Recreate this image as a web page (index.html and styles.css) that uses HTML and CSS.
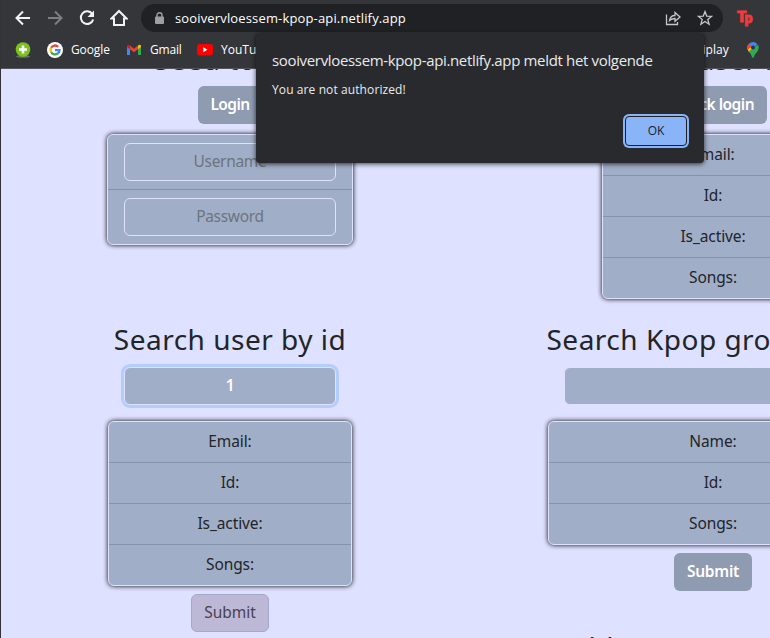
FILE: index.html
```
<!DOCTYPE html>
<html lang="nl">
<head>
<meta charset="utf-8">
<title>Kpop API</title>
<link rel="stylesheet" href="styles.css">
</head>
<body>
<div class="window">
  <header class="chrome">
    <div class="toolbar">
      <svg class="nav" viewBox="0 0 18 18"><path d="M16 9H3M9 2.5L2.5 9L9 15.5"/></svg>
      <svg class="nav nav-off" viewBox="0 0 18 18"><path d="M2 9h13M9 2.500L15.500 9L9 15.500"/></svg>
      <svg class="nav" viewBox="0 0 18 18"><path d="M14.300 5A6.300 6.300 0 1 0 15.200 10.500"/><path class="solid" d="M16 1.500V8H9.500z"/></svg>
      <svg class="nav" viewBox="0 0 18 18"><path d="M1.500 9.500L9 2l7.500 7.500H14V16H4V9.500z"/></svg>
      <div class="omnibox">
        <svg class="lock" viewBox="0 0 10 13"><rect y="4.500" width="9" height="7.500" rx="1"/><path d="M2 5V3.200a2.500 2.500 0 0 1 5 0V5"/></svg>
        <span class="url">sooivervloessem-kpop-api.netlify.app</span>
        <svg class="action share" viewBox="0 0 16 16"><path d="M1.500 4.500V14.500H12.500V12"/><path d="M4.500 10.500C5 7 7 5.500 10 5.500V2.500L15 7L10 11.300V8.500C7.500 8.500 6 9 4.500 10.500z"/></svg>
        <svg class="action" viewBox="0 0 16 16"><path d="M8 1.600L9.700 6.100L14.600 6.400L10.800 9.500L12.100 14.200L8 11.500L3.900 14.200L5.200 9.500L1.400 6.400L6.300 6.100z"/></svg>
      </div>
      <span class="ext"><b class="ext-t">T</b><b class="ext-p">p</b></span>
    </div>
    <div class="bookmarks">
      <svg class="ico plus" viewBox="0 0 16 16"><ellipse cx="8" cy="14.500" rx="7" ry="1.300" fill="#6b6e70"/><circle cx="8" cy="7.500" r="7.300" fill="#79c41c"/><path d="M8 3.500v8M4 7.500h8" stroke="#fff" stroke-width="2.600"/></svg>
      <svg class="ico google" viewBox="0 0 16 16"><circle cx="8" cy="8" r="8" fill="#fff"/><g fill="none" stroke-width="2.300"><path d="M4.100 5.800A4.500 4.500 0 0 1 11.200 4.800" stroke="#ea4335"/><path d="M4.100 10.200A4.500 4.500 0 0 1 4.100 5.800" stroke="#fbbc05"/><path d="M4.100 10.200A4.500 4.500 0 0 0 10.900 11.400" stroke="#34a853"/><path d="M8 8.100h4.500A4.500 4.500 0 0 1 10.900 11.400" stroke="#4285f4"/></g></svg>
      <span class="mark m-google">Google</span>
      <svg class="ico gmail" viewBox="0 0 14 12"><path d="M0 2v9h3V5z" fill="#4285f4"/><path d="M14 2v9h-3V5z" fill="#34a853"/><path d="M3 1.500L7 4.700L11 1.500V5.200L7 8.300L3 5.200z" fill="#ea4335"/><path d="M0 2Q.5 0 3 1.500V5.200L0 3z" fill="#c5221f"/><path d="M14 2Q13.500 0 11 1.500V5.200L14 3z" fill="#fbbc04"/></svg>
      <span class="mark m-gmail">Gmail</span>
      <svg class="ico yt" viewBox="0 0 16 12"><rect width="16" height="11.500" rx="3" fill="#f00"/><path d="M6.300 3.300v5L10.500 5.800z" fill="#fff"/></svg>
      <span class="mark m-yt">YouTube</span>
      <span class="mark m-play">Multiplay</span>
      <svg class="ico maps" viewBox="0 0 12 16"><path d="M1.200 9Q4.500 12 5.100 15.200Q6 16.500 6.800 15.200Q7.500 12.500 10 10Q13 6 11 2.800L3 8z" fill="#34a853"/><path d="M.3 5Q0 7.500 1.700 9.700L6 6L2 2Q.5 3.500.3 5z" fill="#fbbc04"/><path d="M1.600 2L4.500 5L.5 7.500Q-.5 4 1.600 2z" fill="#ea4335"/><path d="M1.600 2Q6-2 10.500 2L6 7L4 4z" fill="#4285f4"/><circle cx="6" cy="5.500" r="2" fill="#243454"/></svg>
    </div>
  </header>
  <main class="page">
    <section class="cell top">
      <h2>Seed token</h2>
      <button class="btn login">Login</button>
      <ul class="list form-list">
        <li><input class="field" placeholder="Username"></li>
        <li><input class="field" placeholder="Password"></li>
      </ul>
    </section>
    <section class="cell top">
      <h2>Check user info</h2>
      <button class="btn check">Check login</button>
      <ul class="list check-list"><li>Email:</li><li>Id:</li><li>Is_active:</li><li>Songs:</li></ul>
    </section>
    <section class="cell">
      <h2>Search user by id</h2>
      <input class="field search focused" value="1">
      <ul class="list user-list"><li>Email:</li><li>Id:</li><li>Is_active:</li><li>Songs:</li></ul>
      <button class="btn submit pending">Submit</button>
    </section>
    <section class="cell">
      <h2>Search Kpop group by id</h2>
      <input class="field search wide">
      <ul class="list group-list"><li>Name:</li><li>Id:</li><li>Songs:</li></ul>
      <button class="btn submit">Submit</button>
      <h2 class="h-next">Add Kpop group to list</h2>
    </section>
  </main>
  <div class="dialog" role="alertdialog">
    <div class="d-title"><span>sooivervloessem-kpop-api.netlify.app meldt het volgende</span></div>
    <div class="d-text">You are not authorized!</div>
    <button class="ok">OK</button>
  </div>
</div>
</body>
</html>
```
FILE: styles.css
```
* { box-sizing: border-box; }
body { margin: 0; background: #dee1ff; }
.window {
  position: relative;
  width: 770px;
  height: 638px;
  overflow: hidden;
  font-family: "Noto Sans", sans-serif;
  color: #212529;
  background: #dee1ff;
  border-left: 1px solid #343438;
}
.chrome {
  position: relative;
  height: 69px;
  background: #35363a;
  border-bottom: 1px solid #55565b;
  color: #fff;
  font-family: "Open Sans", sans-serif;
}
.toolbar { display: flex; align-items: center; height: 36px; padding-left: 13px; }
.nav { width: 18px; height: 18px; margin-right: 14px; fill: none; stroke: #f1f3f4; stroke-width: 2; flex: none; }
.nav .solid { fill: #f1f3f4; stroke: none; }
.nav-off { stroke: #7d7e82; }
.omnibox { display: flex; align-items: center; width: 582px; height: 28px; border-radius: 14px; background: #202124; flex: none; margin-left: -1px; padding: 0 10px 0 14px; }
.lock { width: 10px; height: 13px; fill: #9aa0a6; flex: none; }
.lock path { fill: none; stroke: #9aa0a6; stroke-width: 1.4; }
.url { font-size: 13px; letter-spacing: .15px; margin-left: 10px; white-space: nowrap; flex: 1; }
.action { width: 16px; height: 16px; fill: none; stroke: #c4c7ca; stroke-width: 1.3; flex: none; }
.share { margin-right: 16px; }
.ext { display: flex; margin-left: 14px; color: #f33a3a; font: 900 16px/18px Roboto, sans-serif; -webkit-text-stroke: .8px #f33a3a; }
.ext-t { font-size: 15px; margin-top: -1px; }
.ext-p { font-size: 14px; margin-left: -2px; }
.bookmarks { display: flex; align-items: center; height: 28px; padding-left: 14px; font-size: 12px; white-space: nowrap; }
.ico { flex: none; }
.plus { width: 16px; height: 16px; margin-right: 16px; }
.google { width: 16px; height: 16px; margin-right: 8px; }
.gmail { width: 14px; height: 12px; margin-right: 9px; }
.yt { width: 16px; height: 12px; margin-right: 8px; }
.maps { width: 12px; height: 16px; }
.mark { flex: none; line-height: 16px; padding-bottom: 1px; }
.m-google { width: 56px; letter-spacing: -.1px; }
.m-gmail { width: 47px; letter-spacing: -.2px; }
.m-yt { width: 430px; }
.m-play { width: 80px; margin-right: 18px; text-align: right; margin-left: -2px; letter-spacing: .1px; }
.page { display: grid; grid-template-columns: 458px 508px; grid-template-rows: 252px 317px; }
.cell { display: flex; flex-direction: column; align-items: center; }
.top { margin-top: -29px; }
h2 { margin: -1px 0 9px; height: 38px; font-size: 28px; line-height: 38px; letter-spacing: .5px; font-weight: 400; white-space: nowrap; flex: none; }
.top h2 { margin: 0 0 8px; }
.btn { width: 78px; height: 38px; padding: 0 0 2px; border: 0; border-radius: 6px; background: #8e9bb1; color: #fff; font: 600 15.5px "Noto Sans", sans-serif; letter-spacing: -.25px; flex: none; }
.login { width: 64px; letter-spacing: -.6px; }
.check { width: 108px; letter-spacing: -.5px; }
.pending { background: #bcb8d5; border: 1px solid #a1a9cc; color: #48434f; font-weight: 400; letter-spacing: 0; }
.list { list-style: none; margin: 0; padding: 0; border: 1px solid #dee1ff; border-radius: 6px; background: #a1aec8; box-shadow: 0 0 5px #000; flex: none; font-size: 15.5px; letter-spacing: -.1px; text-align: center; }
.list li { height: 41px; line-height: 38px; border-bottom: 1px solid #8492ac; }
.list li:last-child { height: 40px; border-bottom: 0; }
.top .list { margin-top: 10px; }
.form-list { width: 246px; }
.form-list li { height: 55px; padding: 8px 0; }
.form-list li:last-child { height: 54px; }
.check-list { width: 222px; }
.user-list { width: 244px; }
.group-list { width: 330px; }
.field { display: block; width: 212px; height: 38px; margin: 0 auto; padding: 0 0 2px; border: 1px solid #dee1ff; border-radius: 6px; background: #a1aec8; color: #fff; text-align: center; font: 15.5px "Noto Sans", sans-serif; letter-spacing: -.3px; outline: 0; flex: none; }
.field::placeholder { color: #6c757d; opacity: 1; }
.search { margin-bottom: 16px; font-weight: 600; }
.focused { box-shadow: 0 0 0 3px #b4cdff; }
.wide { width: 298px; }
.submit { margin-top: 8px; }
.h-next { margin-top: 37px; }
.dialog { position: absolute; left: 255px; top: 33px; width: 448px; height: 130px; padding: 16px; border-radius: 4px; background: #292a2d; color: #e8eaed; box-shadow: 0 1px 5px #000b; font-family: "Open Sans", sans-serif; display: flex; flex-direction: column; }
.d-title { height: 24px; line-height: 23px; font-size: 15px; letter-spacing: -.34px; white-space: nowrap; }
.d-text { height: 18px; margin-top: 8px; line-height: 18px; font-size: 12px; letter-spacing: .1px; }
.ok { align-self: flex-end; width: 62px; height: 30px; margin: 17px 1px 0 0; padding: 0 0 2px; border: 1px solid #202124; border-radius: 4px; background: #8ab4f8; box-shadow: 0 0 0 2px #8ab4f8; color: #202124; font: 12px "Open Sans", sans-serif; }
```
